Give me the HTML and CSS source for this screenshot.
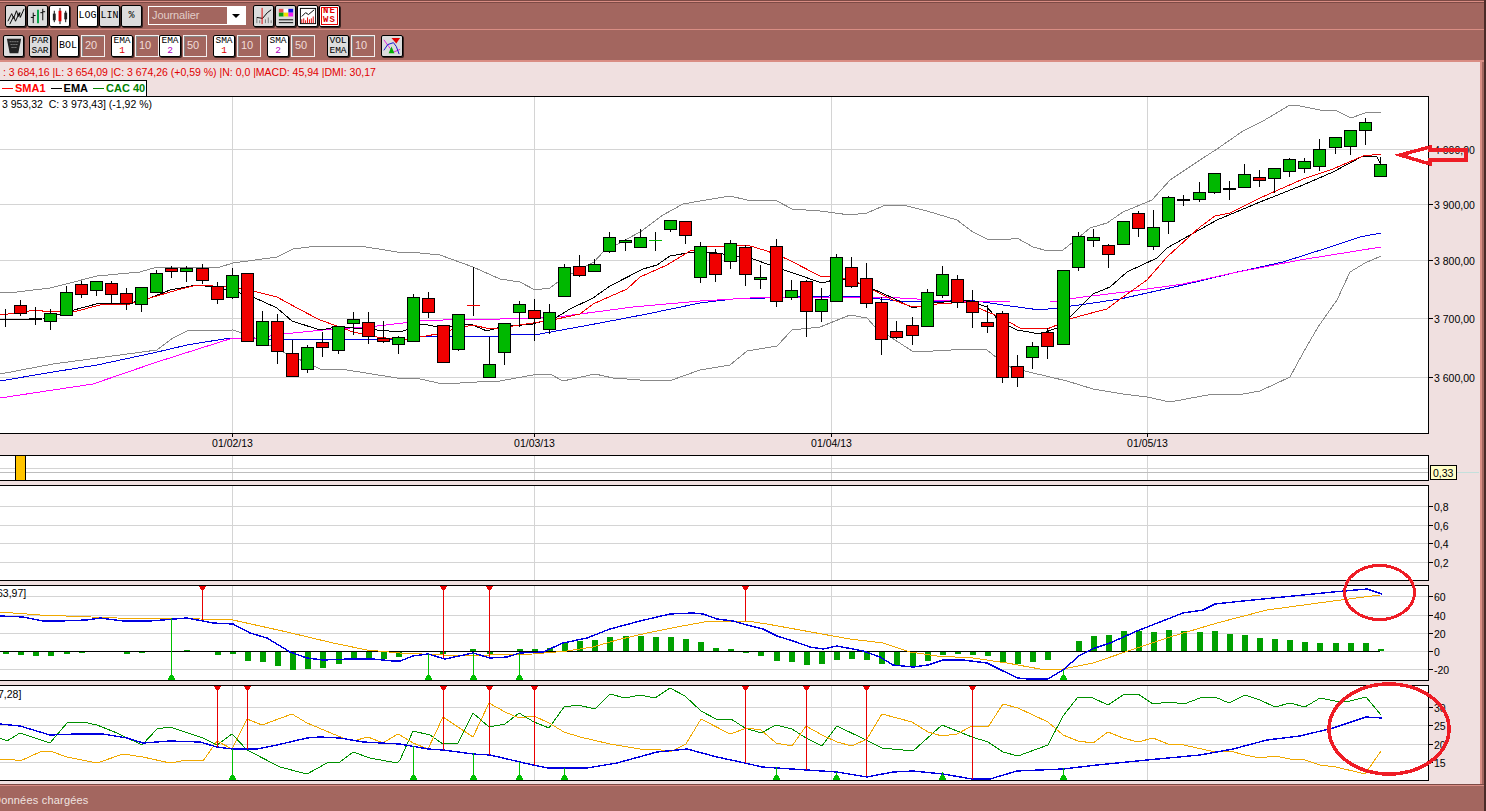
FILE: index.html
```html
<!DOCTYPE html>
<html lang="fr">
<head>
    <meta charset="UTF-8">
    <meta name="viewport" content="width=device-width, initial-scale=1.0">
    <title>Graphique CAC 40</title>
    <link rel="stylesheet" href="styles.css">
</head>
<body>
    <div class="app">
        <header class="toolbars">
            <div class="toolbar row-1">
                <button class="btn gray"><svg viewBox="0 0 21 21"><path d="M2 16 6 8 8 13 11 5 13 11 15 7M4 19 8 11 10 16 14 7 15 12 19 3" /></svg></button>
                <button class="btn gray"><svg viewBox="0 0 21 21"><path d="M5.500 7V18M3 12H5.500M5.500 10H8M15.500 3V15M13 7H15.500M15.500 6H18" /><path class="green-stroke" d="M10.500 4V18" /></svg></button>
                <button class="btn"><svg viewBox="0 0 21 21"><path d="M4.500 5V17M16.500 5V17M10.500 2V19" /><rect x="3" y="8" width="3" height="7" class="dark-fill" /><rect x="9" y="5" width="3" height="11" class="red-fill" /><rect x="15" y="7" width="3" height="7" class="dark-fill" /></svg></button>
                <button class="btn gap-6">LOG</button>
                <button class="btn gray">LIN</button>
                <button class="btn gray">%</button>
                <div class="select">
                    <span class="select-text">Journalier</span>
                    <span class="select-arrow"></span>
                </div>
                <button class="btn gray"><svg viewBox="0 0 21 21"><path class="gray-stroke" d="M3 18V12M6 18V15M12 18V14M15 18V12M18 18V15" /><path d="M3 12 9 13 14 7 18 4" /><path class="red-stroke" d="M8.500 2V19" /></svg></button>
                <button class="btn gray"><svg viewBox="0 0 21 21"><rect x="3" y="3" width="5" height="4" fill="#f05050" /><rect x="8" y="3" width="5" height="4" fill="#fff" /><rect x="13" y="3" width="5" height="4" fill="#1010e0" /><rect x="3" y="7" width="5" height="4" fill="#10a010" /><rect x="8" y="7" width="5" height="4" fill="#f0e000" /><rect x="13" y="7" width="5" height="4" fill="#f020f0" /><path d="M3 14.500H18M3 17.500H18" /></svg></button>
                <button class="btn"><svg viewBox="0 0 21 21"><rect x="2.500" y="2.500" width="16" height="16" class="no-fill" /><path d="M4 11 8 7 11 9 17 4" /><path class="red-stroke" d="M4 18V14M6 18V13M8 18V15M10 18V12M12 18V14M14 18V13M16 18V11" /></svg></button>
                <button class="btn news"><span>NE</span><span>WS</span></button>
            </div>
            <div class="toolbar row-2">
                <button class="btn gray trash"><svg viewBox="0 0 21 21"><path class="dark-fill" d="M3 3H18L15 18H6Z" /><path class="dots" d="M6 6H15M7 9H14M8 12H13" /></svg></button>
                <button class="btn gray two-line gap-5">PAR<br>SAR</button>
                <button class="btn gap-6">BOL</button>
                <span class="field">20</span>
                <button class="btn two-line gap-6">EMA<br><b class="red">1</b></button>
                <span class="field">10</span>
                <button class="btn two-line">EMA<br><b class="purple">2</b></button>
                <span class="field">50</span>
                <button class="btn two-line gap-6">SMA<br><b class="red">1</b></button>
                <span class="field">10</span>
                <button class="btn two-line gap-6">SMA<br><b class="purple">2</b></button>
                <span class="field">50</span>
                <button class="btn gray two-line gap-12">VOL<br>EMA</button>
                <span class="field">10</span>
                <button class="btn gray gap-6"><svg viewBox="0 0 21 21"><path class="magenta-stroke" d="M2 4 7 11 12 17 19 14" /><path class="blue-stroke" d="M2 15 6 9 12 7 15 11 18 19" /><path class="red-fill no-stroke" d="M10 2H19L15 8Z" /><path class="green-fill no-stroke" d="M7 18 10 11 13 18Z" /></svg></button>
            </div>
        </header>

        <main class="workspace">
            <div class="info-line">: 3 684,16 |L: 3 654,09 |C: 3 674,26 (+0,59 %) |N: 0,0 |MACD: 45,94 |DMI: 30,17</div>
            <div class="legend">
                <span class="legend-item sma"><i></i>SMA1</span>
                <span class="legend-item ema"><i></i>EMA</span>
                <span class="legend-item cac"><i></i>CAC 40</span>
            </div>
            <svg id="price" class="panel" width="1480" height="359" viewBox="0 96 1480 359"></svg>
            <svg id="volume" class="panel" width="1480" height="30" viewBox="0 455 1480 30"></svg>
            <svg id="empty" class="panel" width="1480" height="100" viewBox="0 485 1480 100"></svg>
            <svg id="macd" class="panel" width="1480" height="100" viewBox="0 585 1480 100"></svg>
            <svg id="dmi" class="panel" width="1480" height="100" viewBox="0 685 1480 100"></svg>
        </main>

        <footer class="status">Données chargées</footer>

        <!-- annotations tracees a la main par dessus le graphique -->
        <svg class="marks" width="1486" height="811" viewBox="0 0 1486 811">
            <path d="M1400 155 1430 147V150H1466V160H1430V164Z" />
            <ellipse cx="1379.500" cy="592.500" rx="35" ry="27" />
            <ellipse cx="1389" cy="729" rx="60" ry="45" />
        </svg>
    </div>

    <script src="chart.js"></script>
</body>
</html>
```

FILE: styles.css
```css
*{box-sizing: border-box;}
html,body{margin:0;height:100%;overflow:hidden;}
body{font-family:"Liberation Sans",Arial,sans-serif;background:#a3665f;}

.app{
    position:relative;
    width:1486px;
    height:811px;
    background:#a3665f;
    border-right:2px solid #4a2b28;
    overflow:hidden;
}

/* toolbars */
.toolbars{
    height:62px;
    border-top:1px solid #7d4a45;
    border-bottom:2px solid #d98d84;
}
.toolbar{
    display:flex;
    align-items:center;
}
.row-1{
    height:29px;
    padding-left:5px;
    gap:1px;
    border-top:1px solid #d98d84;
    border-bottom:1px solid #d98d84;
    box-shadow:0 1px 0 #7d4a45 inset;
}
.row-2{
    height:29px;
    padding-left:3px;
    padding-top:2px;
}
.btn{
    display:block;
    width:21px;
    height:22px;
    padding:0;
    background:#fff;
    border:1px solid #000;
    border-radius:2px;
    box-shadow:1px 1px 0 #3a2220;
    font-family:"Liberation Mono",monospace;
    font-size:10px;
    line-height:10px;
    color:#000;
    text-align:center;
}
.row-2 .btn{width:22px;}
.row-2 .btn.trash{width:21px;}
.btn.gray{background:#dcdcdc;}
.btn svg{display:block;width:20px;height:20px;}
.btn svg path{fill:none;stroke:#000;stroke-width:1;}
.btn svg rect{stroke:none;}
.btn svg rect.no-fill{fill:none;stroke:#000;}
.btn svg path.green-stroke{stroke:#00a040;stroke-width:2;}
.btn svg path.red-stroke{stroke:#e00000;}
.btn svg path.gray-stroke{stroke:#777;}
.btn svg path.magenta-stroke{stroke:#e020e0;}
.btn svg path.blue-stroke{stroke:#1010d0;}
.btn svg .dark-fill{fill:#222;stroke:none;}
.btn svg .red-fill{fill:#e00000;}
.btn svg .green-fill{fill:#00b000;}
.btn svg path.no-stroke{stroke:none;}
.btn svg path.dots{stroke:#bbb;stroke-dasharray:1 1;}
.btn svg path.dark-fill{fill:#222;stroke:none;}
.btn svg path.red-fill{fill:#e00000;stroke:none;}
.btn svg path.green-fill{fill:#00b000;stroke:none;}
.btn.two-line{font-size:9.500px;line-height:10px;}
.btn.two-line b{font-weight:normal;}
.red{color:#e00000;}
.purple{color:#b000c0;}
.btn.news{
    display:flex;
    flex-direction:column;
    justify-content:center;
    color:#e00000;
    font-weight:bold;
    font-size:9px;
    line-height:9px;
    letter-spacing:1px;
    outline:1px solid #e00000;
    outline-offset:-3px;
}

.gap-5{margin-left:5px;}
.gap-6{margin-left:6px;}
.gap-12{margin-left:12px;}

.select{
    display:flex;
    width:98px;
    height:19px;
    margin:0 6px 0 5px;
    border:1px solid #fff;
    background:#a3665f;
}
.select-text{
    flex:1;
    padding:2px 0 0 3px;
    font-size:11px;
    line-height:13px;
    letter-spacing:-.1px;
    color:#e2cdc8;
}
.select-arrow{
    position:relative;
    width:18px;
    background:#fff;
}
.select-arrow::after{
    content:"";
    position:absolute;
    left:5px;
    top:7px;
    border:4px solid transparent;
    border-top:4px solid #000;
    border-bottom:0;
}
.field{
    display:block;
    width:24px;
    height:22px;
    margin-left:2px;
    padding:3px 0 0 3px;
    background:#a3665f;
    border:1px solid #f4eeee;
    box-shadow:inset 1px 1px 0 #888;
    font-size:11px;
    color:#f0dcd8;
}

/* zone du graphique */
.workspace{
    width:1480px;
    height:723px;
    background:#f0e0e0;
    box-shadow:2px 0 0 #d98d84;
}
.info-line{
    height:18px;
    padding:3px 0 0 3px;
    font-size:10.500px;
    line-height:14px;
    color:#e00000;
    white-space:pre;
}
.legend{
    display:flex;
    gap:5px;
    width:148px;
    height:16px;
    padding-left:2px;
    margin-left:-1px;
    background:#fff;
    border:1px solid #000;
    border-bottom:0;
    font-size:11px;
    font-weight:bold;
    line-height:15px;
    white-space:nowrap;
}
.legend-item{display:flex;align-items:center;}
.legend-item i{display:block;width:11px;height:1px;background:currentColor;margin-right:2px;}
.legend-item.sma{color:#ff0000;}
.legend-item.ema{color:#000;}
.legend-item.cac{color:#008000;}

.panel{display:block;overflow:hidden;font-family:"Liberation Sans",Arial,sans-serif;font-size:10.500px;}
.panel .plot{fill:#fff;stroke:none;}
.panel .frame{fill:none;stroke:#000;shape-rendering:crispEdges;}
.panel .grid{stroke:#d4d4d4;shape-rendering:crispEdges;}
.panel .grid-dark{stroke:#bdbdbd;shape-rendering:crispEdges;}
.panel .tick{stroke:#000;shape-rendering:crispEdges;}
.panel text{fill:#000;}
.panel .line{fill:none;shape-rendering:crispEdges;}
.panel .c-gray{stroke:#888;}
.panel .c-red{stroke:#f00000;}
.panel .c-black{stroke:#000;}
.panel .c-blue{stroke:#0000e0;}
.panel .c-magenta{stroke:#ff00ff;}
.panel .c-orange{stroke:#f0a800;}
.panel .c-green{stroke:#009000;}
.panel .thick{stroke-width:1.400;}
.panel .body{stroke:#000;shape-rendering:crispEdges;}
.panel .body.up{fill:#00b800;}
.panel .body.down{fill:#f00000;}
.panel .wick{stroke:#000;shape-rendering:crispEdges;}
.panel .hist{fill:#00a000;shape-rendering:crispEdges;}
.panel .sig-red{stroke:#e80000;fill:#e80000;shape-rendering:crispEdges;}
.panel .sig-green{stroke:#00c000;fill:#00c000;shape-rendering:crispEdges;}
.panel .marker{fill:#ffc400;stroke:#000;shape-rendering:crispEdges;}
.panel .tip{fill:#ffffc8;stroke:#000;shape-rendering:crispEdges;}
.panel .tip-line{stroke:#c4e0dc;shape-rendering:crispEdges;}

.status{
    height:26px;
    padding:7px 0 0 0;
    margin-left:-7px;
    border-top:1px solid #d98d84;
    box-shadow:0 -1px 0 #7d4a45;
    font-size:11px;
    line-height:14px;
    letter-spacing:.2px;
    color:#f0e4e0;
}

.marks{position:absolute;left:0;top:0;pointer-events:none;}
.marks path,.marks ellipse{fill:none;stroke:#ee1c25;stroke-width:3;shape-rendering:crispEdges;}
.marks path{stroke-width:3.500;}
.marks ellipse + ellipse{stroke-width:3.500;}
```

FILE: chart.js
```js
// donnees relevees sur le graphique : x, haut corps, bas corps, haut meche, bas meche, sens
const candles = [
    [5,319,319,309,327,'k'],[20,305,313,300,316,'r'],[35,318,320,307,325,'k'],[50,313,321,309,330,'g'],
    [66,292,315,286,315,'g'],[81,284,294,281,298,'r'],[96,281,290,281,296,'g'],[111,283,294,281,303,'r'],
    [126,293,303,288,310,'r'],[141,287,304,287,312,'g'],[156,273,292,270,292,'g'],[171,268,271,266,278,'r'],
    [186,268,271,266,282,'g'],[202,268,280,264,284,'r'],[217,286,299,282,304,'r'],[232,275,297,268,299,'g'],
    [247,273,341,273,341,'r'],[262,321,345,311,345,'g'],[277,321,351,314,364,'r'],[292,353,376,340,376,'r'],
    [307,347,369,345,373,'g'],[322,342,347,332,357,'r'],[338,326,350,326,354,'g'],[353,319,323,312,335,'g'],
    [368,322,336,312,344,'r'],[383,338,341,321,343,'r'],[398,337,344,336,354,'g'],[413,297,341,294,341,'g'],
    [428,298,312,292,318,'r'],[443,325,362,325,363,'r'],[458,314,349,314,351,'g'],[473,305,305,267,316,'r'],
    [489,364,377,337,377,'g'],[504,323,352,323,365,'g'],[519,304,312,301,327,'g'],[534,310,318,299,341,'r'],
    [549,312,329,304,334,'g'],[564,267,296,264,296,'g'],[579,266,275,255,277,'r'],[594,264,271,259,272,'g'],
    [609,237,251,232,253,'g'],[625,240,242,239,251,'g'],[640,237,247,229,247,'g'],[655,240,240,232,251,'g'],
    [670,220,229,220,232,'g'],[685,221,235,221,244,'r'],[700,246,277,242,283,'g'],[715,253,274,249,282,'r'],
    [730,243,261,240,269,'g'],[745,247,274,245,286,'r'],[760,277,279,265,289,'g'],[776,246,301,239,307,'r'],
    [791,290,297,280,300,'g'],[806,281,311,280,337,'r'],[821,299,311,288,322,'g'],[836,257,301,254,301,'g'],
    [851,267,286,257,288,'r'],[866,278,303,263,308,'r'],[881,302,339,297,355,'r'],[896,331,337,321,339,'r'],
    [912,325,335,317,345,'r'],[927,292,326,289,326,'g'],[942,274,295,266,298,'g'],[957,279,302,275,308,'r'],
    [972,301,312,290,328,'r'],[987,322,326,305,333,'r'],[1002,313,377,311,383,'r'],[1017,366,377,355,387,'r'],
    [1032,346,357,342,369,'g'],[1047,332,346,328,359,'r'],[1063,270,344,270,344,'g'],[1078,236,267,232,271,'g'],
    [1093,237,240,229,247,'g'],[1108,245,254,244,268,'r'],[1123,221,244,221,244,'g'],[1138,213,228,211,237,'r'],
    [1153,227,246,210,250,'g'],[1168,197,221,196,234,'g'],[1183,199,201,195,206,'k'],[1199,192,199,182,202,'g'],
    [1214,173,192,173,194,'g'],[1229,188,190,181,200,'k'],[1244,174,187,164,188,'g'],[1259,177,180,170,187,'r'],
    [1274,168,178,168,193,'g'],[1289,159,171,158,177,'g'],[1304,161,168,158,173,'g'],[1319,149,166,139,171,'g'],
    [1335,137,147,137,154,'g'],[1350,130,146,130,155,'g'],[1365,122,130,118,145,'g'],[1380,164,176,157,176,'g']
];

const priceLines = [
    ['c-gray','0,292 17,292 50,288 70,283 97,276 140,272 157,267 177,267 220,267 233,263 277,257 293,249 317,246 360,246 397,252 420,253 440,255 473,267 500,279 520,282 535,290 550,288 563,278 594,262 603,252 640,232 663,215 683,204 700,201 730,196 747,200 777,201 792,209 820,211 850,215 867,213 883,206 903,205 927,211 957,220 973,232 987,239 1005,240 1017,238 1033,247 1048,251 1063,250 1073,242 1090,228 1107,223 1123,212 1152,200 1170,180 1200,160 1217,149 1243,131 1263,121 1290,105 1300,106 1320,110 1337,111 1351,118 1365,113 1381,112'],
    ['c-gray','0,374 53,364 157,350 173,338 187,331 233,330 253,337 283,352 320,369 347,370 397,378 420,379 443,384 477,382 500,381 533,375 550,374 563,381 595,374 613,378 640,380 672,380 700,370 730,365 747,351 777,346 792,330 820,327 850,315 867,318 875,327 892,338 912,351 933,351 970,349 987,350 997,358 1012,368 1067,381 1093,389 1123,394 1147,397 1170,402 1213,394 1243,394 1260,391 1290,377 1303,353 1318,327 1337,300 1350,272 1365,263 1381,256'],
    ['c-blue','0,381 53,372 97,365 153,353 187,345 230,338 290,340 407,339 427,336 500,336 510,335 540,334 600,323 647,314 700,303 733,299 830,296 860,297 900,301 933,302 967,300 983,302 1010,306 1040,310 1057,308 1093,303 1120,299 1147,293 1183,285 1233,273 1283,262 1327,248 1360,237 1381,233'],
    ['c-magenta','0,398 93,384 157,362 217,343 233,338 257,338 283,334 323,330 377,326 420,321 467,319 500,319 557,317 580,314 633,307 700,301 767,297 833,297 900,298 950,301 1010,302 1050,302 1083,297 1133,291 1183,284 1233,273 1300,260 1381,247'],
    ['c-black','0,320 43,319 70,311 100,303 130,303 150,298 170,290 197,285 213,287 230,290 253,297 277,308 292,321 320,330 337,327 353,328 377,330 400,332 423,324 443,328 470,324 487,331 500,327 533,324 557,317 570,309 593,298 610,286 643,269 657,265 670,256 693,252 717,253 753,259 770,265 793,273 822,283 837,279 853,281 873,289 893,298 913,308 933,303 967,300 987,307 1000,322 1017,330 1040,334 1057,328 1070,317 1093,294 1110,287 1127,272 1157,258 1167,248 1217,220 1260,202 1303,185 1333,172 1363,156 1377,157 1380,163'],
    ['c-red','0,315 17,313 35,310 50,312 77,311 100,305 130,304 150,298 177,290 197,285 213,286 233,287 253,291 277,297 297,308 320,320 337,326 353,332 377,337 403,340 420,337 443,333 457,328 473,325 490,329 500,328 533,323 557,319 580,314 593,304 627,289 640,277 667,265 690,251 707,247 727,246 747,245 767,251 787,259 820,276 837,277 853,280 873,290 893,300 913,307 937,304 967,302 983,310 1000,317 1020,328 1047,329 1057,325 1070,319 1080,316 1107,309 1123,297 1147,280 1167,257 1200,227 1215,216 1230,213 1260,198 1303,179 1333,169 1363,156 1381,154']
];

const macdHist = [
    [6,654],[21,655],[36,656],[51,656],[67,654],[82,653],[127,654],[142,653],[187,650],[218,655],[233,654],
    [248,661],[263,662],[278,666],[293,670],[308,669],[323,668],[339,664],[354,660],[369,660],[384,659],[399,657],
    [443,654],[473,649],[490,654],[520,649],[535,649],[550,648],[565,643],[580,641],[595,640],[610,637],[626,636],
    [641,636],[656,637],[671,637],[686,639],[701,642],[716,648],[731,649],[746,653],[761,656],[777,661],[792,662],
    [807,665],[822,664],[837,660],[852,659],[867,660],[882,664],[897,666],[913,666],[928,661],[943,655],[958,654],
    [973,655],[988,656],[1003,662],[1018,664],[1033,662],[1048,660],[1079,641],[1094,636],[1109,635],[1124,631],
    [1139,631],[1154,632],[1169,630],[1184,631],[1200,632],[1215,631],[1230,634],[1245,635],[1260,638],[1275,639],
    [1290,640],[1305,642],[1320,643],[1336,643],[1351,643],[1366,643],[1381,649]
];
const macdOrange = '0,612 40,615 117,618 200,619 233,620 287,632 333,643 367,650 400,653 443,655 490,655 533,654 567,651 593,647 617,640 647,633 677,627 710,621 747,621 767,624 800,630 833,636 850,639 883,643 910,652 937,656 973,658 1007,663 1040,669 1063,669 1093,663 1137,648 1170,637 1217,623 1267,610 1333,601 1380,595';
const macdBlue = '0,616 23,617 43,621 60,621 87,620 100,618 123,621 150,621 187,618 213,623 233,624 250,633 267,638 290,652 307,658 323,660 350,659 373,659 393,661 400,661 413,656 428,654 445,659 473,653 490,658 507,657 520,653 543,652 563,643 587,638 610,629 640,621 670,614 693,613 703,614 717,619 733,621 747,625 763,629 777,636 793,641 810,647 823,649 837,646 863,651 880,657 893,665 913,667 928,665 943,660 963,660 987,663 1003,671 1018,678 1028,679 1048,679 1063,670 1080,655 1095,648 1110,643 1137,631 1183,613 1203,610 1215,604 1243,601 1283,597 1333,592 1367,589 1382,594';

const dmiGreen = '0,738 7,741 20,733 50,743 67,723 83,722 97,725 117,733 142,745 157,729 170,727 203,738 217,745 232,734 247,750 280,767 307,774 327,763 340,762 353,752 370,758 397,763 400,760 413,731 430,735 443,744 458,743 473,713 489,727 505,724 519,713 534,722 549,728 564,707 578,705 595,709 610,694 625,698 640,695 655,698 670,688 685,696 701,711 716,719 731,719 745,728 761,733 776,725 792,729 806,738 822,746 837,726 866,740 882,748 913,751 942,725 972,737 988,742 1003,752 1018,756 1048,745 1063,716 1078,697 1093,698 1108,705 1123,695 1138,694 1153,704 1170,702 1184,704 1200,698 1215,697 1229,703 1245,695 1260,700 1275,707 1290,703 1305,707 1320,698 1335,701 1350,701 1366,697 1381,715';
const dmiOrange = '0,759 10,759 20,761 40,752 50,751 67,757 97,763 123,754 143,757 170,763 187,760 203,761 217,741 232,749 247,719 262,725 292,714 307,723 343,738 353,741 368,737 383,743 398,734 400,735 413,743 428,749 443,717 473,737 489,703 505,712 519,718 534,716 549,723 564,732 580,737 610,744 640,749 657,749 670,752 686,744 701,719 730,734 747,728 761,730 776,743 792,746 806,726 822,735 837,742 852,746 867,739 882,714 912,722 928,732 942,736 957,734 972,726 988,727 1003,704 1018,708 1048,722 1063,735 1078,741 1093,743 1108,732 1123,738 1138,742 1153,738 1168,744 1184,745 1215,752 1230,751 1245,755 1260,758 1275,756 1290,759 1305,760 1320,765 1336,767 1365,774 1381,751';
const dmiBlue = '0,724 20,726 50,735 77,734 103,734 127,738 143,743 170,741 200,742 217,747 232,749 257,749 277,745 307,738 320,737 340,738 363,742 400,744 428,749 443,750 473,754 490,755 520,762 533,765 548,768 587,768 617,763 657,752 687,749 717,757 745,763 762,767 807,770 837,772 867,777 893,772 913,771 943,774 972,779 990,779 1017,771 1063,769 1097,765 1147,760 1200,755 1233,749 1267,740 1300,736 1333,728 1366,717 1382,718';

const vGrid = [232,534,831,1147];

const hline = (y,cls,x2=1428) => `<line class="${cls}" x1="0" x2="${x2}" y1="${y}" y2="${y}"/>`;
const line = (cls,pts) => `<polyline class="line ${cls}" points="${pts}"/>`;

// fond, quadrillage commun a chaque panneau
const panelBack = (top,bottom,grid) => {
    let s = `<rect class="plot" x="0" y="${top}" width="1428" height="${bottom-top}"/>`;
    grid.forEach((y)=>{ s += hline(y,'grid'); });
    vGrid.forEach((x)=>{ s += `<line class="grid" x1="${x+.5}" x2="${x+.5}" y1="${top}" y2="${bottom}"/>`; });
    return s;
};
const panelFrame = (top,bottom) => `<path class="frame" d="M-2 ${top}H1428.500V${bottom}H-2"/>`;

const axis = (labels) => labels.map(([y,t])=>
    `<line class="tick" x1="1429" x2="1433" y1="${y}" y2="${y}"/><text x="1434" y="${y+4}">${t}</text>`
).join('');

const sigDown = (x,y,top) =>
    `<g class="sig-red"><line x1="${x+.5}" x2="${x+.5}" y1="${top}" y2="${y}"/><polygon points="${x-3},${top} ${x+4},${top} ${x+.5},${top+6}"/></g>`;
const sigUp = (x,y,bottom) =>
    `<g class="sig-green"><line x1="${x+.5}" x2="${x+.5}" y1="${y}" y2="${bottom}"/><polygon points="${x-3},${bottom} ${x+4},${bottom} ${x+.5},${bottom-6}"/></g>`;

// 1 panneau des cours
const drawPrice = () => {
    let s = panelBack(96,433,[149.5,204.5,260.5,318.5,377.5]);
    priceLines.forEach(([c,p])=>{ s += line(c,p); });
    candles.forEach(([x,top,bot,wt,wb,dir])=>{
        s += `<line class="wick" x1="${x+.5}" x2="${x+.5}" y1="${wt}" y2="${wb}"/>`;
        if(top===bot){
            const col = dir==='g' ? '#00b800' : dir==='r' ? '#f00000' : '#000';
            s += `<line stroke="${col}" shape-rendering="crispEdges" x1="${x-6}" x2="${x+7}" y1="${top+.5}" y2="${top+.5}"/>`;
        } else if(dir==='k'){
            s += `<rect class="body" fill="#000" x="${x-6+.5}" y="${top+.5}" width="12" height="${bot-top-1}"/>`;
        } else {
            s += `<rect class="body ${dir==='g'?'up':'down'}" x="${x-6+.5}" y="${top+.5}" width="12" height="${bot-top}"/>`;
        }
    });
    s += panelFrame(96.5,433.5);
    s += `<text x="2" y="108" xml:space="preserve">3 953,32  C: 3 973,43] (-1,92 %)</text>`;
    s += axis([[149.5,'4 000,00'],[204.5,'3 900,00'],[260.5,'3 800,00'],[318.5,'3 700,00'],[377.5,'3 600,00']]);
    [[232,'01/02/13'],[534,'01/03/13'],[831,'01/04/13'],[1147,'01/05/13']].forEach(([x,t])=>{
        s += `<line class="tick" x1="${x+.5}" x2="${x+.5}" y1="434" y2="437"/><text x="${x+.5}" y="447" text-anchor="middle">${t}</text>`;
    });
    document.querySelector('#price').innerHTML = s;
};

// 2 petit panneau volume avec le curseur jaune
const drawVolume = () => {
    let s = panelBack(455,481,[468.5]);
    s += hline(472.5,'grid-dark');
    s += `<rect class="marker" x="15.500" y="455.500" width="10" height="25"/>`;
    s += panelFrame(455.5,480.5);
    s += `<line class="tip-line" x1="1456" x2="1479" y1="472.500" y2="472.500"/>`;
    s += `<rect class="tip" x="1430.500" y="465.500" width="26" height="14"/><text x="1433" y="476.500">0,33</text>`;
    document.querySelector('#volume').innerHTML = s;
};

const drawEmpty = () => {
    let s = panelBack(485,581,[506.5,525.5,543.5,562.5]);
    s += panelFrame(485.5,580.5);
    s += axis([[506.5,'0,8'],[525.5,'0,6'],[543.5,'0,4'],[562.5,'0,2']]);
    document.querySelector('#empty').innerHTML = s;
};

// 3 MACD
const drawMacd = () => {
    let s = panelBack(585,681,[596.5,615.5,633.5,669.5]);
    macdHist.forEach(([x,y])=>{
        const top = Math.min(y,651), h = Math.abs(y-651);
        s += `<rect class="hist" x="${x-3}" y="${top}" width="6" height="${h}"/>`;
    });
    s += hline(651.5,'tick',1380);
    s += hline(651.5,'grid').replace('x1="0"','x1="1381"');
    s += line('c-orange',macdOrange);
    s += line('c-blue thick',macdBlue);
    [[202,620],[443,658],[489,657],[745,621]].forEach(([x,y])=>{ s += sigDown(x,y,585); });
    [[171,618],[428,654],[473,653],[519,653],[1063,670]].forEach(([x,y])=>{ s += sigUp(x,y,680); });
    s += panelFrame(585.5,680.5);
    s += `<text x="-3" y="597">63,97]</text>`;
    s += axis([[596.5,'60'],[615.5,'40'],[633.5,'20'],[651.5,'0'],[669.5,'-20']]);
    document.querySelector('#macd').innerHTML = s;
};

// 4 DMI
const drawDmi = () => {
    let s = panelBack(685,781,[707.5,725.5,744.5,762.5]);
    s += line('c-green',dmiGreen);
    s += line('c-orange',dmiOrange);
    s += line('c-blue thick',dmiBlue);
    [[217,747],[247,749],[443,750],[489,755],[534,765],[745,763],[806,770],[866,776],[972,779]].forEach(([x,y])=>{ s += sigDown(x,y,685); });
    [[232,749],[413,746],[473,753],[519,762],[564,768],[776,767],[836,772],[942,772],[1063,768]].forEach(([x,y])=>{ s += sigUp(x,y,780); });
    s += panelFrame(685.5,780.5);
    s += `<text x="-2" y="698">7,28]</text>`;
    s += axis([[707.5,'30'],[725.5,'25'],[744.5,'20'],[762.5,'15']]);
    document.querySelector('#dmi').innerHTML = s;
};

drawPrice();
drawVolume();
drawEmpty();
drawMacd();
drawDmi();
```
